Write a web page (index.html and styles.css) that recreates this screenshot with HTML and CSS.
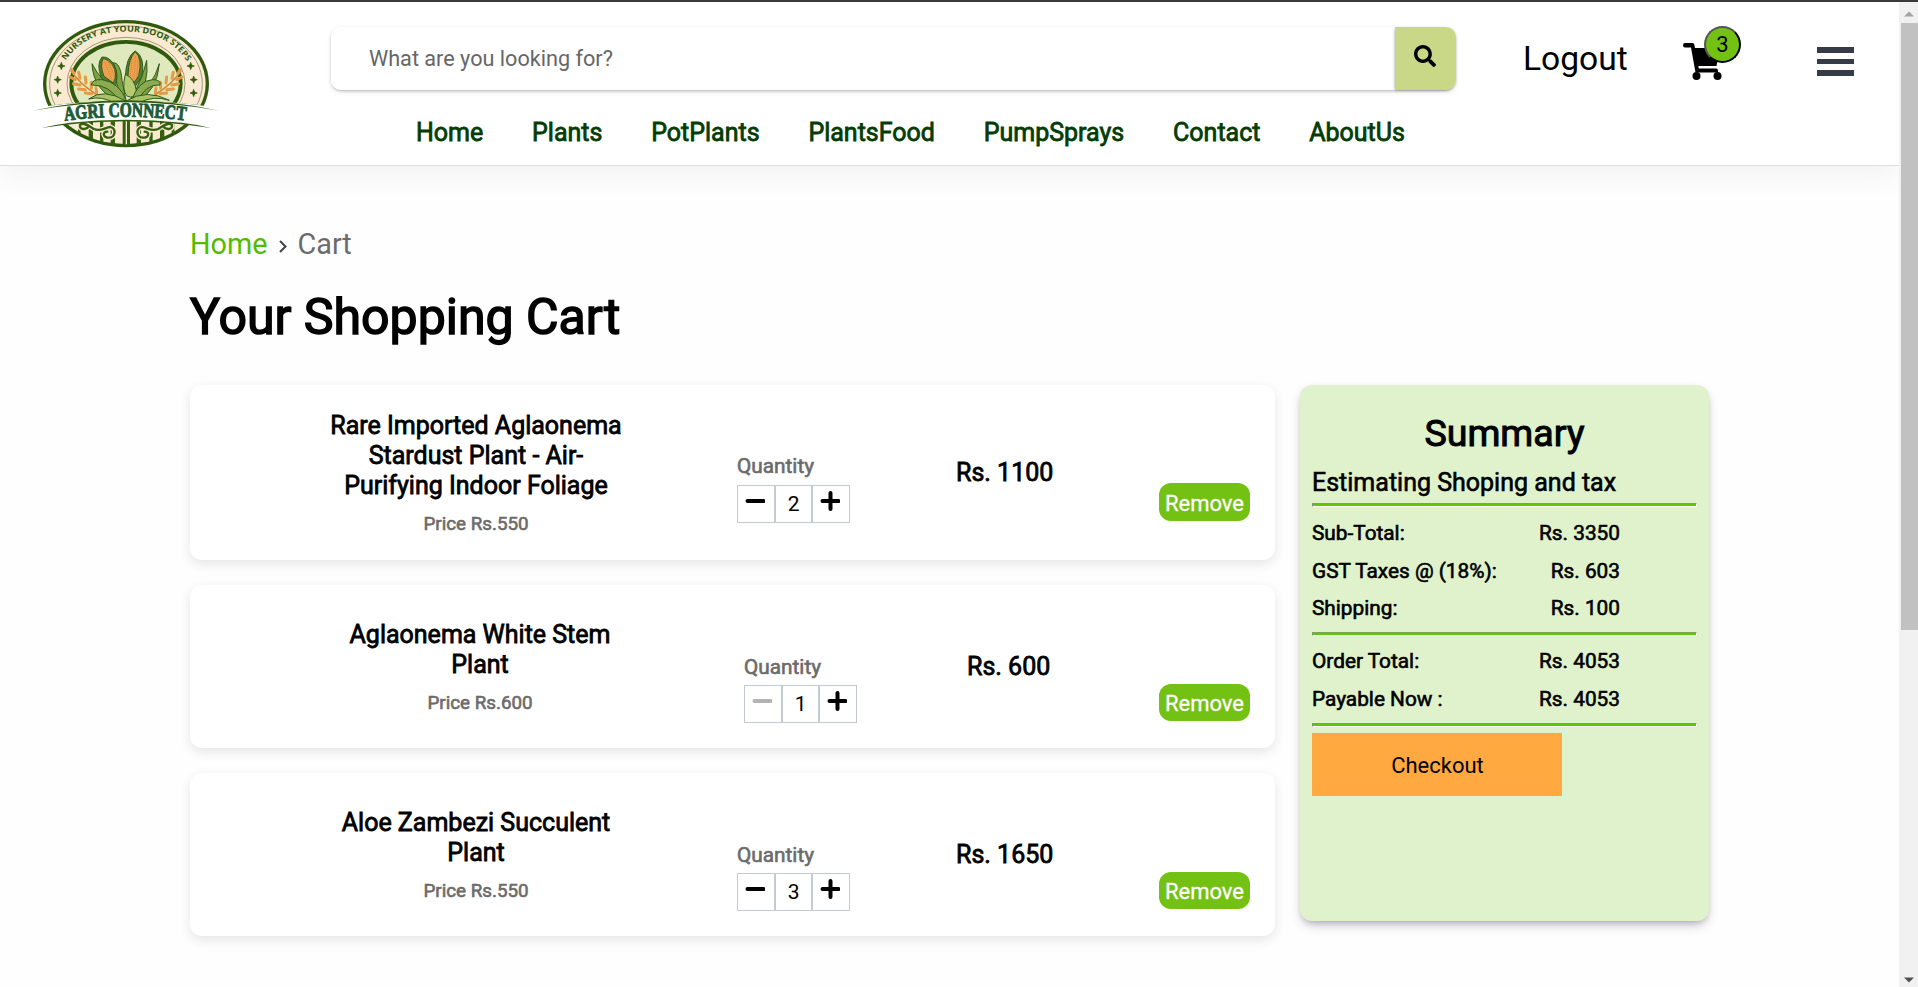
FILE: index.html
```html
<!DOCTYPE html>
<html lang="en">
<head>
<meta charset="utf-8">
<title>Agri Connect - Cart</title>
<link rel="stylesheet" href="styles.css">
</head>
<body>
<div class="topline"></div>
<div class="viewport">
  <div class="page">
    <header class="header">
      <a class="logo">
        <svg width="194" height="134" viewBox="30 50 582 402">
          <defs>
            <path id="arc" d="M137 181 C180 118 240 94 318 94 C400 94 465 122 506 192"/>
            <path id="nameArc" d="M134 361 Q317 337 504 361"/>
            <clipPath id="lower"><path d="M100 372 Q318 352 540 372 L540 450 L100 450Z"/></clipPath>
            <clipPath id="disc"><ellipse cx="318" cy="250" rx="240" ry="183"/></clipPath>
            <clipPath id="upper"><path d="M60 50H580V320Q318 282 60 320Z"/></clipPath>
          </defs>
          <g clip-path="url(#lower)">
            <ellipse cx="318" cy="250" rx="249" ry="191" fill="#2f5a0e"/>
            <ellipse cx="318" cy="250" rx="238" ry="181" fill="#fbead2"/>
            <g clip-path="url(#disc)">
              <g fill="#34600f">
                <rect x="174" y="350" width="8" height="100"/><rect x="206" y="350" width="13" height="100"/>
                <rect x="240" y="350" width="10" height="100"/><rect x="272" y="350" width="13" height="100"/>
                <rect x="308" y="350" width="22" height="100"/><rect x="350" y="350" width="13" height="100"/>
                <rect x="388" y="350" width="10" height="100"/><rect x="420" y="350" width="13" height="100"/>
                <rect x="455" y="350" width="8" height="100"/>
              </g>
              <rect x="317" y="350" width="4" height="82" fill="#fbead2"/>
              <g fill="none" stroke="#fbead2" stroke-width="15" stroke-linecap="round">
                <path d="M203 382C193 388 178 388 180 374C188 362 208 378 222 386C244 396 254 380 272 380C290 386 286 410 268 412C248 412 246 394 262 394"/>
                <path d="M433 382C443 388 458 388 456 374C448 362 428 378 414 386C392 396 382 380 364 380C346 386 350 410 368 412C388 412 390 394 374 394"/>
              </g>
              <g fill="none" stroke="#34600f" stroke-width="7" stroke-linecap="round">
                <path d="M203 382C193 388 178 388 180 374C188 362 208 378 222 386C244 396 254 380 272 380C290 386 286 410 268 412C248 412 246 394 262 394"/>
                <path d="M433 382C443 388 458 388 456 374C448 362 428 378 414 386C392 396 382 380 364 380C346 386 350 410 368 412C388 412 390 394 374 394"/>
              </g>
            </g>
          </g>
          <g clip-path="url(#upper)">
            <ellipse cx="318" cy="250" rx="249" ry="191" fill="#2f5a0e"/>
            <ellipse cx="318" cy="250" rx="239" ry="181" fill="#fbead2"/>
            <ellipse cx="318" cy="250" rx="229" ry="173" fill="none" stroke="#8a8a62" stroke-width="2.5"/>
            <ellipse cx="318" cy="250" rx="177" ry="139" fill="none" stroke="#8a8a62" stroke-width="2.5"/>
            <ellipse cx="318" cy="250" rx="170" ry="131" fill="#2f5a0e"/>
            <ellipse cx="318" cy="250" rx="158" ry="120" fill="#e0e9bd"/>
            <g fill="none" stroke="#d9832c" stroke-width="5">
              <path d="M152 210Q178 250 232 284M484 210Q458 250 404 284"/>
            </g>
            <g stroke="#e69a45" stroke-width="9" stroke-linecap="round">
              <path d="M156 208l6 12M150 230l16 8M176 216l4 18M160 250l20 4M196 230l2 18M176 266l20 2M214 246l0 18M196 278l20 2M228 262l2 16M480 208l-6 12M486 230l-16 8M460 216l-4 18M476 250l-20 4M440 230l-2 18M460 266l-20 2M422 246l0 18M440 278l-20 2M408 262l-2 16"/>
            </g>
            <g stroke="#2f5a1c" stroke-width="3" stroke-linejoin="round">
              <g fill="#7da043">
                <path d="M292 300Q220 270 216 190Q240 240 306 290Z"/>
                <path d="M340 300Q400 255 418 190Q412 270 352 304Z"/>
                <path d="M300 300Q290 220 268 192Q300 172 306 240L318 300Z"/>
                <path d="M330 300Q366 240 380 180Q388 250 348 300Z"/>
              </g>
              <path fill="#557f2f" d="M246 170Q228 192 244 232L282 272Q300 226 282 192Q266 168 246 170Z"/>
              <path fill="#eda14c" d="M250 174Q238 194 252 228L280 248Q294 222 278 194Q264 176 250 174Z"/>
              <path fill="#557f2f" d="M346 152Q318 168 316 232L342 264L366 228Q376 170 346 152Z"/>
              <path fill="#eda14c" d="M346 154Q326 172 324 226L342 248L356 226Q368 174 346 154Z"/>
              <path fill="#b7cc72" d="M316 222Q344 232 350 276Q342 296 322 288Q304 270 316 222Z"/>
              <path fill="#8bab4e" d="M300 306Q270 252 214 254Q216 236 246 238Q300 246 320 304Z"/>
              <path fill="#8bab4e" d="M334 304Q354 240 398 238Q424 238 420 254Q376 250 352 306Z"/>
              <path fill="#a9c369" d="M206 296Q250 262 318 302Q380 264 448 300Q400 284 356 308H284Q244 286 206 296Z"/>
            </g>
            <g fill="none" stroke="#a9642a" stroke-width="1.5" stroke-dasharray="3 3">
              <path d="M254 184L276 238M264 184L284 228M336 176L332 228M346 166L342 238M354 178L350 228"/>
            </g>
          </g>
          <path d="M124 186l3 8 8 3-8 3-3 8-3-8-8-3 8-3ZM113 227l3 8 8 3-8 3-3 8-3-8-8-3 8-3ZM113 267l3 8 8 3-8 3-3 8-3-8-8-3 8-3ZM512 186l3 8 8 3-8 3-3 8-3-8-8-3 8-3ZM521 227l3 8 8 3-8 3-3 8-3-8-8-3 8-3ZM521 267l3 8 8 3-8 3-3 8-3-8-8-3 8-3Z" fill="#2f5a0e" stroke="#2f5a0e" stroke-width="2"/>
          <path d="M40 330Q318 276 596 330L545 344L570 382Q318 338 66 382L94 346Z" fill="#fff"/>
          <path d="M38 331Q318 268 598 331Q318 280 38 331ZM64 383Q110 372 150 367Q318 350 486 367Q530 372 572 383Q318 342 64 383Z" fill="#2f5a0e"/>
          <text class="logo-motto"><textPath href="#arc" textLength="424" lengthAdjust="spacingAndGlyphs">NURSERY AT YOUR DOOR STEPS</textPath></text>
          <text class="logo-name"><textPath href="#nameArc" textLength="364" lengthAdjust="spacingAndGlyphs">AGRI CONNECT</textPath></text>
        </svg>
      </a>
      <div class="center">
        <form class="search">
          <input class="search-input" type="text" placeholder="What are you looking for?">
          <button class="search-btn" type="button" aria-label="Search">
            <svg width="22" height="22" viewBox="0 0 512 512"><path d="M505 442.7L405.300 343c-4.500-4.500-10.600-7-17-7H372c27.600-35.300 44-79.700 44-128C416 93.100 322.900 0 208 0S0 93.100 0 208s93.100 208 208 208c48.300 0 92.700-16.400 128-44v16.300c0 6.400 2.500 12.500 7 17l99.700 99.700c9.400 9.400 24.600 9.400 33.900 0l28.300-28.300c9.400-9.400 9.400-24.600.1-34zM208 336c-70.700 0-128-57.200-128-128 0-70.700 57.200-128 128-128 70.700 0 128 57.200 128 128 0 70.700-57.200 128-128 128z"/></svg>
          </button>
        </form>
        <nav class="nav">
          <a>Home</a><a>Plants</a><a>PotPlants</a><a>PlantsFood</a><a>PumpSprays</a><a>Contact</a><a>AboutUs</a>
        </nav>
      </div>
      <a class="logout">Logout</a>
      <a class="cart">
        <svg width="40" height="37" viewBox="0 0 40 37">
          <path d="M2 0H9.500Q11 0 11.300 1.500L12 5H37L33.500 23H15.500L16 25.500H33Q35 25.500 35 27.500V29.500H12.500L8 4.500H2Q0 4.500 0 2.250Q0 0 2 0Z"/>
          <circle cx="13.500" cy="33" r="4"/><circle cx="34.500" cy="33" r="4"/>
          <path d="M15.500 24.200H36" stroke="#fff" stroke-width="1.200"/>
        </svg>
        <span class="badge">3</span>
      </a>
      <div class="burger"><i></i><i></i><i></i></div>
    </header>

    <main class="main">
      <div class="crumbs"><a class="crumb-home">Home</a><svg class="crumb-sep" width="8" height="13" viewBox="0 0 8 13"><path d="M1 1L6.500 6.500L1 12" fill="none" stroke="#444" stroke-width="2"/></svg><span>Cart</span></div>
      <h1 class="title">Your Shopping Cart</h1>
      <div class="layout">
        <section class="items">
          <article class="item item-first">
            <div class="info"><h3>Rare Imported Aglaonema<br>Stardust Plant - Air-<br>Purifying Indoor Foliage</h3><p>Price Rs.550</p></div>
            <div class="qty"><label>Quantity</label>
              <div class="stepper"><button><svg width="20" height="20"><path d="M2.500 10H18.500"/></svg></button><span>2</span><button><svg width="20" height="20"><path d="M2.500 10H18.500M10.500 2V18"/></svg></button></div></div>
            <div class="total">Rs. 1100</div>
            <button class="remove">Remove</button>
          </article>
          <article class="item item-shifted">
            <div class="info"><h3>Aglaonema White Stem<br>Plant</h3><p>Price Rs.600</p></div>
            <div class="qty"><label>Quantity</label>
              <div class="stepper"><button class="off"><svg width="20" height="20"><path d="M2.500 10H18.500"/></svg></button><span>1</span><button><svg width="20" height="20"><path d="M2.500 10H18.500M10.500 2V18"/></svg></button></div></div>
            <div class="total">Rs. 600</div>
            <button class="remove">Remove</button>
          </article>
          <article class="item">
            <div class="info"><h3>Aloe Zambezi Succulent<br>Plant</h3><p>Price Rs.550</p></div>
            <div class="qty"><label>Quantity</label>
              <div class="stepper"><button><svg width="20" height="20"><path d="M2.500 10H18.500"/></svg></button><span>3</span><button><svg width="20" height="20"><path d="M2.500 10H18.500M10.500 2V18"/></svg></button></div></div>
            <div class="total">Rs. 1650</div>
            <button class="remove">Remove</button>
          </article>
        </section>
        <aside class="summary">
          <h2>Summary</h2>
          <h4>Estimating Shoping and tax</h4>
          <hr>
          <div class="rows">
            <div><span>Sub-Total:</span><span>Rs. 3350</span></div>
            <div><span>GST Taxes @ (18%):</span><span>Rs. 603</span></div>
            <div><span>Shipping:</span><span>Rs. 100</span></div>
          </div>
          <hr>
          <div class="rows rows-total">
            <div><span>Order Total:</span><span>Rs. 4053</span></div>
            <div><span>Payable Now :</span><span>Rs. 4053</span></div>
          </div>
          <hr>
          <button class="checkout">Checkout</button>
        </aside>
      </div>
    </main>
  </div>
  <div class="scrollbar">
    <svg class="arrow" width="10" height="6"><path d="M0 5.500L5 .5L10 5.500Z" fill="#a3a3a3"/></svg>
    <div class="thumb"></div>
    <svg class="arrow down" width="10" height="6"><path d="M0 .5L5 5.500L10 .5Z" fill="#505050"/></svg>
  </div>
</div>
</body>
</html>
```
FILE: styles.css
```css
* { box-sizing: border-box; margin: 0; padding: 0; }
body {
  height: 987px;
  overflow: hidden;
  background: #fefefe;
  color: #000;
  font-family: Roboto, "Liberation Sans", sans-serif;
}
button, input { font-family: inherit; border: 0; background: none; color: inherit; }
svg { display: block; }

.topline { height: 2px; background: #3b3a3b; }
.viewport { display: flex; height: 985px; }
.page { flex: 1; min-width: 0; overflow: hidden; }

.header {
  display: flex;
  align-items: flex-start;
  height: 164px;
  padding-left: 30px;
  background: #fff;
  border-bottom: 1px solid #dedede;
  box-shadow: 0 8px 30px rgba(0, 0, 0, .06);
}
.logo { margin-top: 15px; width: 301px; }
.logo-motto { font: 700 25px "Open Sans", sans-serif; fill: #2f5a0e; }
.logo-name { font: 700 60px "Liberation Serif", serif; fill: #1d5c36; stroke: #1d5c36; stroke-width: 3px; }

.center { width: 1125px; margin-top: 25px; }
.search {
  display: flex;
  height: 63px;
  border-radius: 10px;
  box-shadow: 0 2px 5px -1px rgba(50, 50, 93, .25), 0 1px 3px -1px rgba(0, 0, 0, .3);
}
.search-input { width: 1064px; padding: 0 0 0 38px; font-size: 21.650px; outline: 0; border-radius: 10px 0 0 10px; background: #fff; }
.search-input::placeholder { color: #666; opacity: 1; }
.search-btn {
  width: 61px;
  padding-left: 19px;
  padding-bottom: 6px;
  border-radius: 0 10px 10px 0;
  background: #c9d886;
  box-shadow: -1px 1px 3px -1px rgba(0, 0, 0, .4);
}
.nav { display: flex; gap: 48.8px; margin: 23px 0 0 85px; }
.nav a { font-size: 25px; line-height: 40px; color: #043c04; -webkit-text-stroke: .8px #043c04; }

.logout { margin: 37px 0 0 67px; font-size: 33.6px; line-height: 40px; width: 160px; }
.cart { position: relative; margin-top: 41px; width: 40px; height: 37px; }
.badge {
  position: absolute;
  left: 21px;
  top: -17px;
  width: 37px;
  height: 37px;
  border: 2px solid #000;
  border-color: #555 #000 #000 #555;
  border-radius: 50%;
  background: #73c113;
  font-size: 22px;
  line-height: 34px;
  text-align: center;
}
.burger { display: grid; gap: 6px; width: 37px; margin: 45px 0 0 94px; }
.burger i { height: 5.600px; background: #373a47; }

.main { padding: 58px 0 0 190px; }
.crumbs { display: flex; align-items: center; font-size: 28.800px; line-height: 40px; color: #6b6b6b; }
.crumb-home { color: #5b0; }
.crumb-sep { margin: 4px 11px 0 11px; }
.title { margin: 23px 0 38px; font-size: 50px; line-height: 60px; font-weight: 400; -webkit-text-stroke: 1.500px #000; }

.layout { display: flex; align-items: flex-start; gap: 25px; }
.items { display: grid; gap: 25px; width: 1085px; }
.item {
  display: grid;
  grid-template-columns: 411px 219px 203px 91px;
  align-items: start;
  height: 163px;
  padding-left: 136px;
  border-radius: 12px;
  background: #fff;
  box-shadow: 0 4px 12px rgba(0, 0, 0, .1);
}
.info { width: 300px; align-self: center; padding-top: 2px; text-align: center; }
.info h3 { font-size: 25px; line-height: 30px; font-weight: 400; -webkit-text-stroke: .8px #000; }
.info p { margin-top: 11px; font-size: 18.800px; line-height: 24px; color: #6b6b6b; -webkit-text-stroke: .6px #6b6b6b; }
.qty { display: grid; gap: 5px; margin-top: 69px; }
.qty label { font-size: 20.800px; line-height: 26px; color: #6b6b6b; -webkit-text-stroke: .6px #6b6b6b; }
.stepper { display: flex; }
.stepper > * {
  width: 37.700px;
  height: 38px;
  border: 1px solid #c5cad0;
}
.stepper span { font-size: 21px; line-height: 36px; text-align: center; }
.stepper button { padding: 0 0 6px 7px; }
.stepper path { fill: none; stroke: #000; stroke-width: 4; stroke-linecap: round; }
.stepper .off path { stroke: #b3b3b3; }
.total { align-self: center; padding-top: 1px; font-size: 25px; line-height: 30px; -webkit-text-stroke: .8px #000; }
.remove {
  width: 91px;
  height: 37px;
  margin-top: 99px;
  padding-top: 2px;
  border-radius: 12px;
  background: #73c113;
  color: #fff;
  font-size: 22px;
  line-height: 35px;
  -webkit-text-stroke: .3px #fff;
}
.item-first { height: 175px; }
.item-first .qty { margin-top: 68px; gap: 6px; }
.item-first .remove { height: 38px; margin-top: 98px; padding-top: 3px; }
.item-shifted { grid-template-columns: 407px 219px 203px 91px; padding-left: 140px; }
.item-shifted .qty { padding-left: 7px; }
.item-shifted .total { padding-left: 11px; }

.summary {
  width: 409px;
  height: 536px;
  padding: 22px 12px 0;
  border-radius: 12px;
  background: #dff2cc;
  box-shadow: 0 6px 12px -2px rgba(50, 50, 93, .25), 0 3px 7px -3px rgba(0, 0, 0, .3);
}
.summary h2 { font-size: 37.600px; line-height: 53px; font-weight: 400; text-align: center; -webkit-text-stroke: 1px #000; }
.summary h4 { margin-top: 8px; font-size: 25px; line-height: 30px; font-weight: 400; -webkit-text-stroke: .6px #000; }
.summary hr {
  height: 4px;
  margin: 5px 0 0;
  border: 1px solid;
  border-color: #7ba552 #fff #fff #8a8f80;
  background: #5cc800;
}
.rows { width: 308px; padding-top: 8px; margin-bottom: -1px; }
.rows div { display: flex; justify-content: space-between; font-size: 20.800px; line-height: 37.500px; -webkit-text-stroke: .6px #000; }
.rows-total { padding-top: 6px; margin-bottom: 0; }
.rows-total div { line-height: 38px; }
.checkout { display: block; width: 250px; height: 63px; margin-top: 6px; padding: 2px 0 0 1px; background: #ffa940; font-size: 22px; }

.scrollbar { display: flex; flex-direction: column; width: 19px; padding-left: 2px; background: #f1f1f1; }
.arrow { margin: 9px 0 6px 3px; }
.thumb { height: 607px; background: #c1c1c1; }
.down { margin-top: auto; margin-bottom: 4px; }
```
